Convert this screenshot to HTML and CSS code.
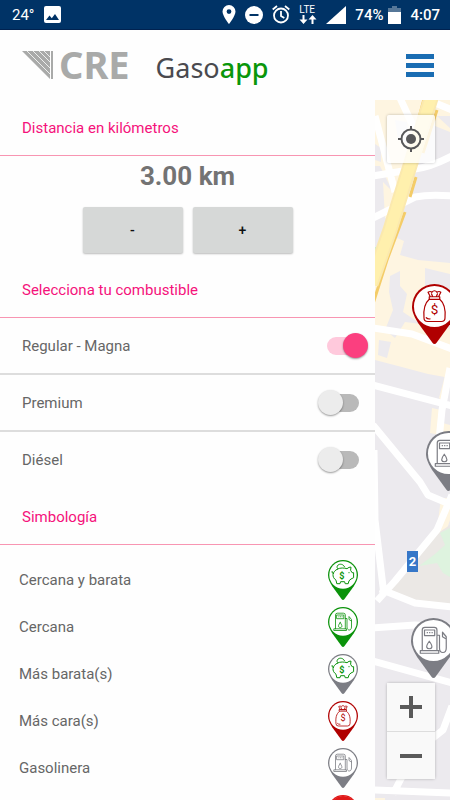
FILE: index.html
```html
<!DOCTYPE html>
<html lang="es">
<head>
<meta charset="utf-8">
<meta name="viewport" content="width=device-width, initial-scale=1">
<title>Gasoapp</title>
<link rel="stylesheet" href="styles.css">
</head>
<body>
<svg class="sprite" aria-hidden="true">
  <symbol id="pin" viewBox="0 0 30 40">
    <path fill="currentColor" d="M15 0a15 15 0 0 1 15 15c0 4-2 7.500-4.200 11.200L16.500 39q-1.500 2-3 0L4.200 26.200C2 22.500 0 19 0 15A15 15 0 0 1 15 0z"/>
    <circle cx="15" cy="15" r="13.700" fill="#fff"/>
  </symbol>
  <symbol id="pump" viewBox="0 0 30 40">
    <g fill="none" stroke="currentColor" stroke-width=".8" stroke-linejoin="round" stroke-linecap="round">
      <path d="M7.500 21.800V8q0-1.800 1.800-1.800h6.200q1.800 0 1.800 1.800v13.800M6.200 21.800h12.300v1.700H6.200zM9 8h6.800v3.700H9zM12.200 15.500c-3 4-1.500 5 0 5s3-1 0-5zM17.300 11.500h1.700v8.500c0 4 4.500 4 4.500 0v-7.500l-2.500-3v3l2.500 1.500"/>
      <path stroke-dasharray=".2 1.400" d="M10.800 9.800h4"/>
    </g>
  </symbol>
  <symbol id="bag" viewBox="0 0 30 40">
    <g fill="none" stroke="currentColor" stroke-width=".8" stroke-linejoin="round" stroke-linecap="round">
      <path d="M12.200 8.500l-1.500-3q1.500-1 2.500 0 1.800-2 3.500 0 1.300-1 2.500 0l-1.500 3zM11.500 8.500h7v1.700h-7zM11.500 10.200c-3.500 3-4 7-3.500 12.500q0 2.300 2.500 2.300h9q2.500 0 2.500-2.300c.500-5.500 0-9.500-3.500-12.500M9.500 22.500q1 1 2.500.8M13 6.500l.8 2M17 6.500l-.8 2"/>
    </g>
    <text class="coin" x="15" y="20">$</text>
  </symbol>
  <symbol id="pig" viewBox="0 0 30 40">
    <g fill="none" stroke="currentColor" stroke-width="1" stroke-linejoin="round" stroke-linecap="round">
      <path d="M9.500 9c3-1.400 6.500-1.200 9.500-.3q2-1.900 4-1.600l-.4 3.200 1.500 2.400h1.500v5l-2.600 1.300-2 1.800-.8 2.900h-3l-.6-2h-4l-.6 2H8.800L8 20.200C3.500 17 4 11.800 9.500 9zM5.500 13.500q-2 0-1.500-2M9 7.500c-.5-4 6-4.700 7.500-.7M21 12.500v.3"/>
    </g>
    <text class="coin coin-bold" x="13.800" y="19">$</text>
  </symbol>
</svg>

<div class="status">
  <div class="status-group">
    <span>24°</span>
    <svg width="17" height="17" viewBox="0 0 17 17"><rect width="17" height="17" rx="2" fill="#fff"/><path d="M2 14l3.500-4.500 2.300 2.700L11 8l4 6z" fill="#036"/></svg>
  </div>
  <div class="status-group status-right">
    <svg width="14" height="19" viewBox="0 0 14 19"><path fill="#fff" fill-rule="evenodd" d="M7 0a6.500 6.500 0 0 1 6.500 6.500C13.500 11 7 19 7 19S.5 11 .5 6.500A6.500 6.500 0 0 1 7 0zM7 4.200a2.400 2.400 0 1 0 0 4.800 2.400 2.400 0 0 0 0-4.800z"/></svg>
    <svg width="18" height="18" viewBox="0 0 18 18"><circle cx="9" cy="9" r="9" fill="#fff"/><path d="M4.500 9h9" stroke="#036" stroke-width="2"/></svg>
    <svg width="18" height="19" viewBox="0 0 18 19"><g fill="none" stroke="#fff" stroke-width="1.800"><circle cx="9" cy="10.500" r="7"/><path d="M9 6v5l3.300 2M.7 4.500L5 1M17.300 4.500L13 1"/></g></svg>
    <span class="lte">LTE<svg width="18" height="9" viewBox="0 0 18 9"><path fill="#fff" d="M3.500 0h2v4.500H8.500L4.500 9 .5 4.500h3zM12.500 9h2V4.500h3L13.500 0l-4 4.500h3z"/></svg></span>
    <svg width="20" height="18" viewBox="0 0 20 18"><path d="M20 0v18H0z" fill="#fff"/></svg>
    <span class="battery"><b>74%</b><svg width="13" height="18" viewBox="0 0 13 18"><path d="M4 0h5v2h4v5H0V2h4z" fill="#567798"/><path d="M0 6h13v12H0z" fill="#fff"/></svg></span>
    <b>4:07</b>
  </div>
</div>

<header class="header">
  <svg class="cre-mark" width="31" height="28" viewBox="0 0 31 28"><path d="M0 0h28v28z" fill="#a9aaa9"/><path d="M5 0l24 24M11 0l18 18M17 0l12 12M22 0l7 7" stroke="#fff" stroke-width=".8"/><path d="M30 0v28" stroke="#a9aaa9" stroke-width="2"/></svg>
  <span class="cre">CRE</span>
  <h1 class="brand">Gaso<span>app</span></h1>
  <button class="menu" type="button" aria-label="Menú"><svg width="28" height="23" viewBox="0 0 28 23"><path d="M0 2.500h28M0 11.500h28M0 20.500h28" stroke="#1a6db3" stroke-width="5"/></svg></button>
</header>

<main class="main">
  <section class="panel">
    <h2 class="title">Distancia en kilómetros</h2>
    <div class="distance">
      <output class="km">3.00 km</output>
      <div class="steps">
        <button type="button" class="step">-</button>
        <button type="button" class="step">+</button>
      </div>
    </div>
    <h2 class="title">Selecciona tu combustible</h2>
    <div class="fuels">
      <label class="fuel">Regular - Magna<input type="checkbox" class="switch" checked></label>
      <label class="fuel">Premium<input type="checkbox" class="switch"></label>
      <label class="fuel">Diésel<input type="checkbox" class="switch"></label>
    </div>
    <h2 class="title">Simbología</h2>
    <ul class="legend">
      <li>Cercana y barata<svg class="pin green"><use href="#pin"/><use href="#pig"/></svg></li>
      <li>Cercana<svg class="pin green"><use href="#pin"/><use href="#pump"/></svg></li>
      <li>Más barata(s)<svg class="pin gray"><use href="#pin"/><use href="#pig" class="green"/></svg></li>
      <li>Más cara(s)<svg class="pin red"><use href="#pin"/><use href="#bag"/></svg></li>
      <li>Gasolinera<svg class="pin gray"><use href="#pin"/><use href="#pump"/></svg></li>
      <li><svg class="pin bright" viewBox="0 0 30 40"><use href="#pin"/><circle cx="15" cy="15" r="14" fill="currentColor"/></svg></li>
    </ul>
  </section>

  <section class="map" aria-label="Mapa">
    <svg class="tiles" viewBox="0 0 75 700" preserveAspectRatio="xMidYMin slice">
      <rect width="75" height="700" fill="#eceaee"/>
      <g fill="#fef5e1">
        <path d="M0 0h50l-4 40-20 38-8 14L5 66H0zM62 0h13v32l-15-6zM8 82l14 14-6 24-6-2zM22 138l7 3-4 14 18 5 32 3v115l-22-4-30-8-23-6v-75l8-30z"/>
        <path d="M57 308l9 2-2 12 11 3v25l-12-3 2-12-10-2zM72 268l-8 30 4 4 7-30zM66 398h9v22l-12 35-4-2zM0 698h10v2H0z"/>
      </g>
      <g fill="#eceaee">
        <path d="M15 176l10-5v15l7 8-4 18 18 12-16-2-10 16-10-8 8-20-4-18zM4 240l12 2-4 16-9-3zM50 168l25 6v55l-14-6 3-24-14-4zM0 44l6 4v14l-6-2z"/>
        <path d="M20 20l12 2 3 22-12-4zM62 16h13v12z"/>
      </g>
      <path d="M75 425l-15 10-28 38-20 20 28 10 35 2z" fill="#ebe8e5"/>
      <path d="M75 428l-10 5 5 12-10 9-16 12 18-3 6 10 7 4z" fill="#def3df"/>
      <path d="M0 147h3v5H0z" fill="#c9efc9"/>
      <g fill="none" stroke="#fff" stroke-width="7" stroke-linejoin="round">
        <path d="M25-2l14 30M58 2l19 8M0 16l20 76M-2 76l42-7q16-2 37-13M-2 118l22-11 20-10q15-3 37-1M-2 228l39 6 40 15"/>
        <path d="M-2 285l79 21M75 268l-8 42-4 40M-2 325l47 57 8 13 24 10M77 395l-15 35-42 51-18 20M-1 350l1 70 9 75M5 489l35 14 37 4M-2 528l42-3 37 2M-2 561l79 22M77 606l-9 24-28 22-22 42M-2 690l79 3"/>
      </g>
      <g fill="none" stroke="#f4cc68" stroke-width="3">
        <path d="M49-1l-8 30M62 10L48 53M28 74l-11 32M41 77l-6 20M14 116L-2 168M30 112L12 160l-16 50"/>
      </g>
      <path d="M57-5L29 85 15 130-4 184" fill="none" stroke="#fbe9ae" stroke-width="15"/>
      <path d="M57-5L29 85 15 130-4 184" fill="none" stroke="#fff0ad" stroke-width="11"/>
    </svg>
    <span class="road-badge">2</span>
    <svg class="pin marker marker-bag red"><use href="#pin"/><use href="#bag"/></svg>
    <svg class="pin marker marker-east gray"><use href="#pin"/><use href="#pump"/></svg>
    <svg class="pin marker marker-south gray"><use href="#pin"/><use href="#pump"/></svg>
    <button type="button" class="control locate" aria-label="Mi ubicación"><svg width="28" height="28" viewBox="0 0 28 28"><g fill="none" stroke="#58585a" stroke-width="2"><circle cx="14" cy="14" r="9.500"/><path d="M14 1v4M14 23v4M1 14h4M23 14h4"/></g><circle cx="14" cy="14" r="5" fill="#58585a"/></svg></button>
    <div class="zoom">
      <button type="button" class="control" aria-label="Acercar"><svg width="22" height="22" viewBox="0 0 22 22"><path d="M0 11h22M11 0v22" stroke="#5a5a5a" stroke-width="4"/></svg></button>
      <button type="button" class="control" aria-label="Alejar"><svg width="22" height="22" viewBox="0 0 22 22"><path d="M0 11h22" stroke="#5a5a5a" stroke-width="4"/></svg></button>
    </div>
  </section>
</main>
</body>
</html>
```
FILE: styles.css
```css
* { box-sizing: border-box; }

body {
  margin: 0;
  height: 100vh;
  overflow: hidden;
  display: flex;
  flex-direction: column;
  background: #fefefe;
  color: #666;
  font: 15px/20px Roboto, sans-serif;
}

button { padding: 0; border: 0; font: inherit; }
svg { display: block; flex: none; }
.sprite { display: none; }

/* Status bar */
.status {
  height: 30px;
  padding: 0 10px 0 12px;
  display: flex;
  align-items: center;
  justify-content: space-between;
  background: #036;
  border-bottom: 1px solid #002250;
  color: #fff;
}
.status b { font-weight: 500; }
.status-group { display: flex; align-items: center; gap: 10px; }
.status-right { gap: 9px; }
.battery { display: flex; align-items: center; gap: 5px; }
.lte { font-size: 10px; line-height: 10px; }

/* Header */
.header {
  height: 70px;
  padding: 0 16px 0 22px;
  display: flex;
  align-items: center;
}
.cre-mark { margin-right: 6px; }
.cre {
  margin-bottom: 2px;
  color: #a9aaa9;
  font: 700 38px/40px "Noto Sans", sans-serif;
}
.brand {
  margin: 5px 0 0 26px;
  color: #4a4a4f;
  font: 400 27px/40px "Noto Sans", sans-serif;
}
.brand span { color: #0a960a; font-weight: 500; }
.menu { margin-left: auto; background: none; }

/* Options panel */
.main {
  flex: 1;
  min-height: 0;
  display: grid;
  grid-template-columns: 5fr 1fr;
}
.panel { min-height: 0; overflow: hidden; background: #fefefe; }
.title {
  margin: 0;
  padding: 18px 22px 17px;
  border-bottom: 1px solid #f895b2;
  color: #f5127b;
  font-size: 15px;
  font-weight: 400;
}
.distance {
  padding-bottom: 9px;
  display: flex;
  flex-direction: column;
  align-items: center;
}
.km {
  margin-bottom: 11px;
  color: #737373;
  font-size: 26px;
  line-height: 40px;
  font-weight: 700;
}
.steps { display: flex; gap: 10px; }
.step {
  width: 100px;
  height: 46px;
  border-radius: 2px;
  background: #d6d8d7;
  box-shadow: 0 1px 2px #0004;
  color: #111;
  font-size: 14px;
  font-weight: 500;
}
.fuel {
  height: 57px;
  padding: 0 7px 0 22px;
  display: flex;
  align-items: center;
  justify-content: space-between;
  border-bottom: 2px solid #ddd;
}
.fuel:last-child { border-color: transparent; }
.switch {
  appearance: none;
  position: relative;
  width: 50px;
  height: 26px;
  margin: 0;
}
.switch::before {
  content: "";
  position: absolute;
  inset: 4px 9px;
  border-radius: 9px;
  background: #b9b9b9;
}
.switch::after {
  content: "";
  position: absolute;
  top: 0;
  left: 0;
  width: 25px;
  height: 25px;
  border-radius: 50%;
  background: #ececec;
  box-shadow: 0 1px 2px #0006;
}
.switch:checked::before { background: #ffc9dc; }
.switch:checked::after { left: 25px; background: #fb3f7f; }

.legend { margin: 0; padding: 11px 17px 0 19px; list-style: none; }
.legend li {
  height: 47px;
  display: flex;
  align-items: center;
  justify-content: space-between;
}
.legend li:last-child { justify-content: flex-end; }

/* Pins */
.pin { width: 30px; height: 40px; }
.green { color: #0a920a; }
.gray { color: #7c7d84; }
.red { color: #b00000; }
.bright { color: #e01818; }
.coin { font: 9px Roboto, sans-serif; text-anchor: middle; fill: currentColor; }
.coin-bold { font-weight: 700; }

/* Map */
.map { position: relative; overflow: hidden; }
.tiles { position: absolute; inset: 0; width: 100%; height: 100%; }
.marker { position: absolute; width: 45px; height: 60px; }
.marker-bag { left: 37px; top: 184px; }
.marker-east { left: 51px; top: 331px; }
.marker-south { left: 36px; top: 518px; }
.road-badge {
  position: absolute;
  left: 32px;
  top: 451px;
  width: 11px;
  background: #3677c8;
  color: #fff;
  font-size: 13px;
  line-height: 21px;
  font-weight: 700;
  text-align: center;
}
.control {
  width: 48px;
  height: 48px;
  display: grid;
  place-items: center;
  background: #fffc;
}
.locate, .zoom {
  position: absolute;
  right: 15px;
  border-radius: 2px;
  box-shadow: 0 0 3px #0004;
}
.locate { top: 15px; }
.zoom { bottom: 21px; }
.zoom .control { background: #f9f9f9; }
.zoom .control + .control { border-top: 1px solid #ddd; }
```
